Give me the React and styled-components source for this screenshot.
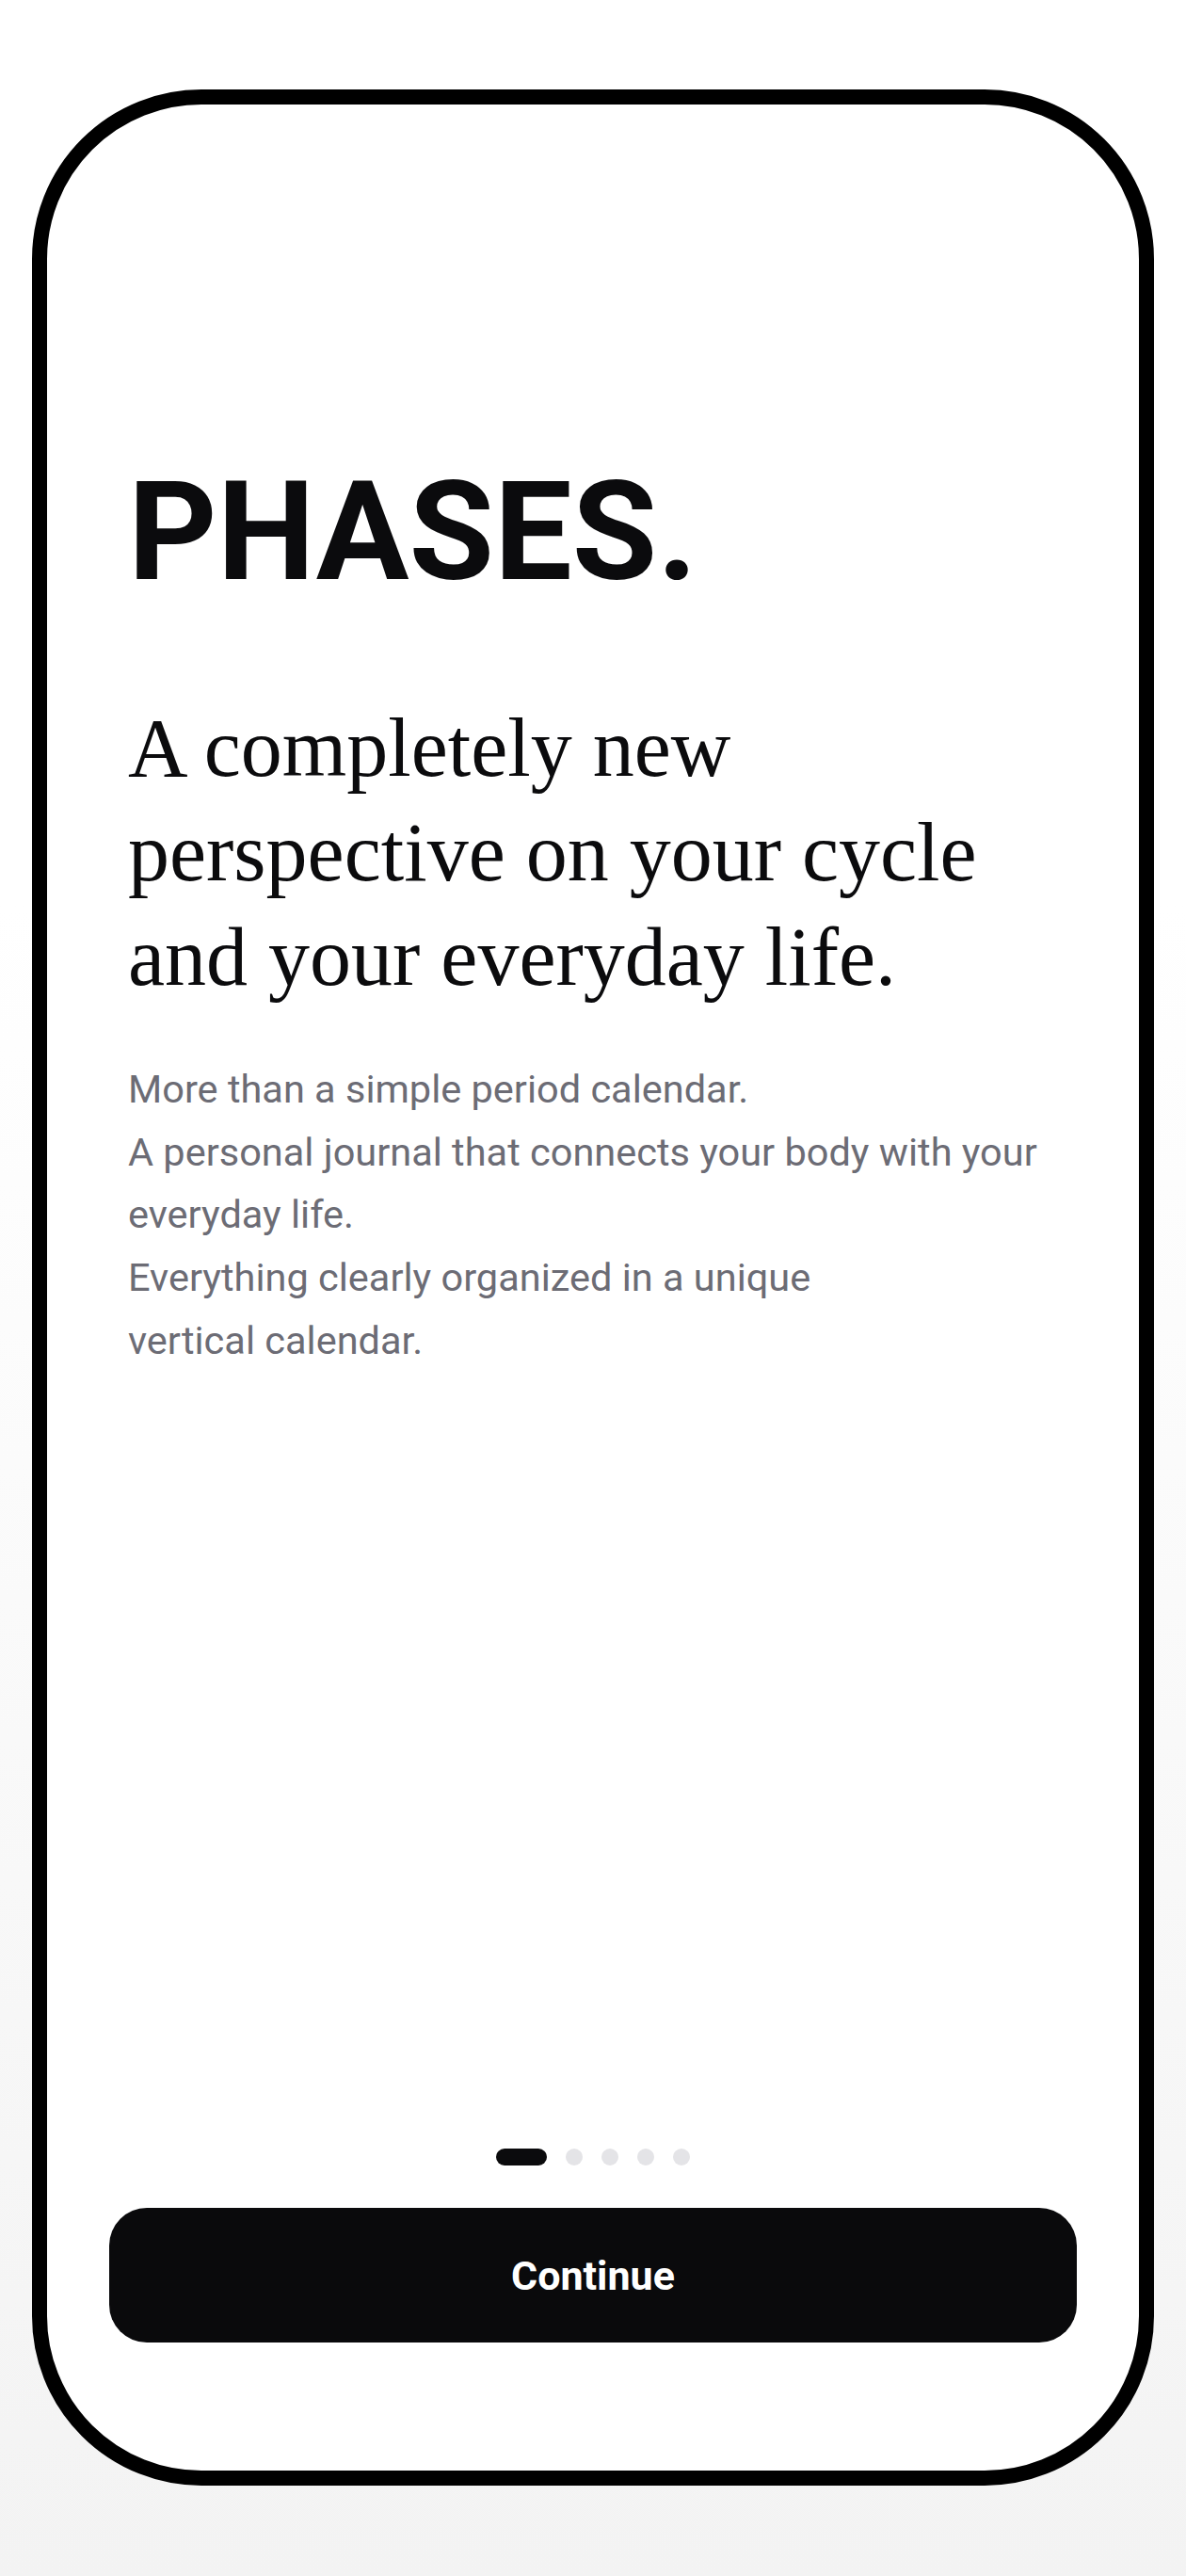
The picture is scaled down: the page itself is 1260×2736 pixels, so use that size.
import React from 'react';
import styled, { createGlobalStyle } from 'styled-components';

const GlobalStyle = createGlobalStyle`
  html, body {
    margin: 0;
    padding: 0;
  }
  body {
    font-family: Roboto, "Open Sans", sans-serif;
  }
  * {
    box-sizing: border-box;
  }
`;

const Page = styled.div`
  min-height: 2736px;
  background: linear-gradient(180deg, #ffffff 0%, #ffffff 35%, #f3f3f3 100%);
  display: flex;
  justify-content: center;
  padding-top: 95px;
`;

const Phone = styled.div`
  width: 1192px;
  height: 2545px;
  border: 16px solid #000;
  border-radius: 180px;
  background: #fff;
  display: flex;
  flex-direction: column;
  padding: 381px 66px 136px;
`;

const Content = styled.div`
  padding: 0 20px;
`;

const Title = styled.h1`
  margin: 0;
  font-family: Roboto, "Open Sans", sans-serif;
  font-weight: 700;
  font-size: 147px;
  line-height: 1;
  color: #0b0b0d;
`;

const Headline = styled.h2`
  margin: 100px 0 0;
  font-family: "Liberation Serif", "Times New Roman", serif;
  font-weight: 400;
  font-size: 88px;
  line-height: 111px;
  color: #0b0b0d;
`;

const Body = styled.p`
  margin: 52px 0 0;
  font-family: Roboto, "Open Sans", sans-serif;
  font-size: 41.5px;
  line-height: 66.7px;
  color: #6c6c75;
`;

const Dots = styled.div`
  margin-top: auto;
  display: flex;
  justify-content: center;
  gap: 20px;
`;

const Dot = styled.span`
  width: ${(p) => (p.$active ? '54px' : '18px')};
  height: 18px;
  border-radius: 9px;
  background: ${(p) => (p.$active ? '#0b0b0d' : '#e4e4e7')};
`;

const Button = styled.button`
  margin-top: 45px;
  width: 100%;
  height: 143px;
  border: none;
  border-radius: 40px;
  background: #0a0a0c;
  color: #fff;
  font-family: Roboto, "Open Sans", sans-serif;
  font-weight: 700;
  font-size: 43px;
  cursor: pointer;
`;

export default function App() {
  return (
    <>
      <GlobalStyle />
      <Page>
        <Phone>
          <Content>
            <Title>PHASES.</Title>
            <Headline>
              A completely new
              <br />
              perspective on your cycle
              <br />
              and your everyday life.
            </Headline>
            <Body>
              More than a simple period calendar.
              <br />
              A personal journal that connects your body with your
              <br />
              everyday life.
              <br />
              Everything clearly organized in a unique
              <br />
              vertical calendar.
            </Body>
          </Content>
          <Dots>
            {[0, 1, 2, 3, 4].map((i) => (
              <Dot key={i} $active={i === 0} />
            ))}
          </Dots>
          <Button>Continue</Button>
        </Phone>
      </Page>
    </>
  );
}
